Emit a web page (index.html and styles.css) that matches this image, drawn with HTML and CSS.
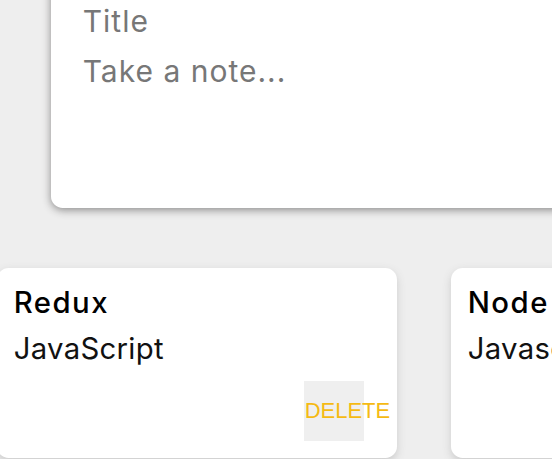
FILE: index.html
```html
<!DOCTYPE html>
<html>
<head>
<meta charset="utf-8">
<title>Keeper</title>
<link rel="stylesheet" href="styles.css">
</head>
<body>
<div class="page">
  <form class="create-note">
    <input class="field title-field" name="title" placeholder="Title">
    <textarea class="field body-field" name="content" placeholder="Take a note..." rows="3"></textarea>
  </form>
  <div class="notes">
    <div class="note">
      <h1 class="note-title">Redux</h1>
      <p class="note-text">JavaScript</p>
      <button class="delete-btn" type="button">DELETE</button>
    </div>
    <div class="note">
      <h1 class="note-title">Node</h1>
      <p class="note-text">Javascript</p>
      <button class="delete-btn" type="button">DELETE</button>
    </div>
  </div>
</div>
</body>
</html>
```
FILE: styles.css
```css
* {
  margin: 0;
  padding: 0;
  box-sizing: border-box;
}

html, body {
  background: #eeeeee;
  overflow: hidden;
}

body {
  font-family: "Inter", "DejaVu Sans", sans-serif;
  width: 552px;
  height: 459px;
}

.page {
  display: flex;
  flex-direction: column;
  align-items: flex-start;
}

.create-note {
  display: flex;
  flex-direction: column;
  flex-shrink: 0;
  width: 800px;
  margin: -30px 0 0 51px;
  padding: 25px;
  background: #ffffff;
  border-radius: 11.7px;
  box-shadow: 0 1.7px 8.3px rgb(138, 137, 137);
}

.field {
  display: block;
  width: 100%;
  border: none;
  outline: none;
  resize: none;
  background: transparent;
  font-family: "Inter", "DejaVu Sans", sans-serif;
  font-size: 30px;
  letter-spacing: 1px;
  color: #333333;
}

.field::placeholder {
  color: #777777;
  opacity: 1;
}

.title-field {
  height: 52px;
  padding: 0 6.7px;
}

.body-field {
  height: 136px;
  padding: 5px 6.7px 6.7px;
  line-height: 39px;
  overflow: hidden;
}

.notes {
  display: flex;
  gap: 54px;
  margin: 60px 0 0 -3px;
}

.note {
  flex-shrink: 0;
  width: 400px;
  padding: 16.7px;
  background: #ffffff;
  border-radius: 11.7px;
  box-shadow: 0 3.3px 8.3px #cccccc;
  display: flow-root;
}

.note-title {
  font-size: 29.3px;
  font-weight: 500;
  letter-spacing: 1.5px;
  line-height: 36px;
  color: #000000;
  margin-bottom: 10px;
}

.note-text {
  font-size: 29.3px;
  font-weight: 400;
  letter-spacing: 0.3px;
  line-height: 36px;
  color: #111111;
  margin-bottom: 14.7px;
  white-space: pre-wrap;
}

.delete-btn {
  float: right;
  width: 60px;
  height: 60px;
  margin-right: 16.7px;
  padding: 0 1px;
  border: none;
  outline: none;
  background: #efefef;
  color: #f5ba13;
  font-family: "Liberation Sans", Arial, sans-serif;
  font-size: 22px;
  line-height: 60px;
  text-align: left;
  white-space: nowrap;
  overflow: visible;
  cursor: pointer;
}
```
